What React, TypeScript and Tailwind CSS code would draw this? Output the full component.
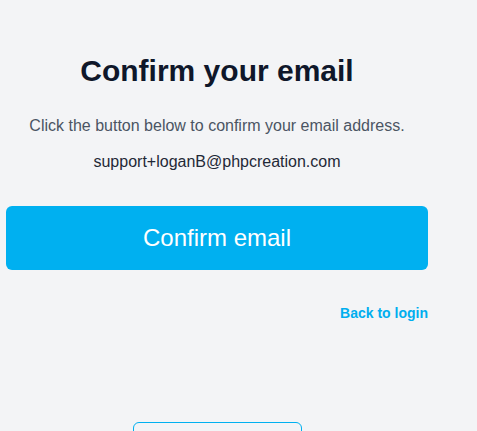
export default function App() {
  return (
    <div
      className="h-[431px] bg-[#f3f4f6] overflow-hidden"
      style={{ fontFamily: '"Liberation Sans", Arial, sans-serif' }}
    >
      <div className="ml-[6px] w-[422px] flex flex-col items-center pt-[53px]">
        {/* Heading */}
        <h1 className="text-[30px] leading-[36px] font-bold text-[#0f172a]">Confirm your email</h1>
        <p className="mt-[27px] text-[16px] leading-[20px] text-[#4b5563]">
          Click the button below to confirm your email address.
        </p>
        <p className="mt-[16px] text-[16px] leading-[20px] text-[#1f2937]">support+loganB@phpcreation.com</p>

        {/* Action */}
        <button className="mt-[34px] w-full h-[64px] rounded-[6px] bg-[#00b0f0] text-white text-[24px]">
          Confirm email
        </button>
        <div className="w-full flex justify-end mt-[35px]">
          <a className="text-[14px] leading-[16px] font-bold text-[#00aeef]">Back to login</a>
        </div>

        <div className="mt-[101px] w-[169px] h-[40px] shrink-0 rounded-[6px] border-[1.5px] border-[#00b0f0]" />
      </div>
    </div>
  );
}
